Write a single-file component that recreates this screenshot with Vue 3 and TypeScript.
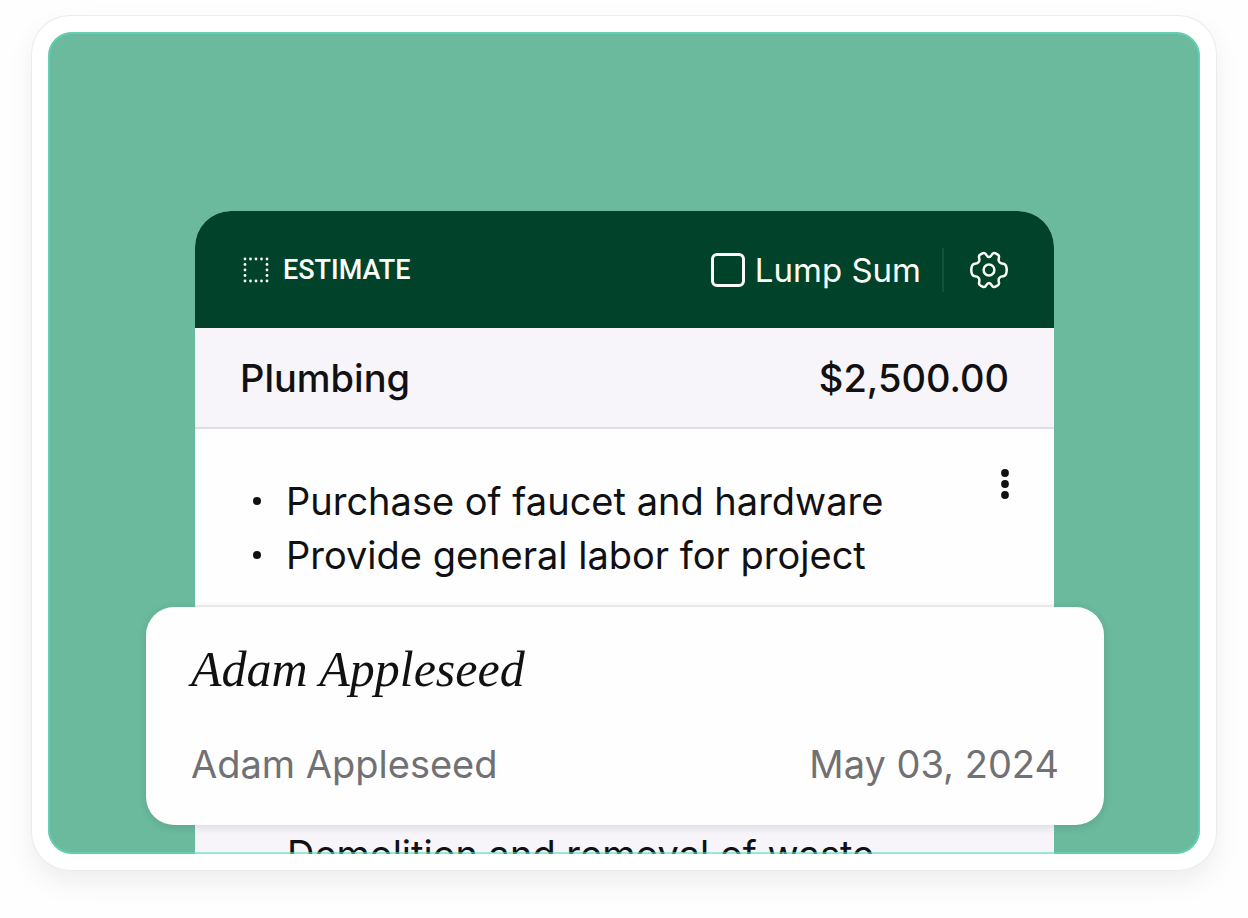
<script setup lang="ts">
import { ref } from 'vue'

interface LineItem {
  name: string
  price: string
  tasks: string[]
}

const lumpSum = ref(false)
const item: LineItem = {
  name: 'Plumbing',
  price: '$2,500.00',
  tasks: ['Purchase of faucet and hardware', 'Provide general labor for project'],
}
const nextTask = 'Demolition and removal of waste'
const signer = 'Adam Appleseed'
const signedOn = 'May 03, 2024'

const dots: { x: number; y: number }[] = []
for (let row = 0; row < 5; row++) {
  for (let col = 0; col < 5; col++) {
    if (row === 0 || row === 4 || col === 0 || col === 4) {
      dots.push({ x: 3 + col * 5.5, y: 3 + row * 5.5 })
    }
  }
}
</script>

<template>
  <main class="page">
    <div class="frame">
      <div class="canvas">
        <article class="estimate">
          <header class="bar">
            <h1 class="title">
              <svg class="dotted" viewBox="0 0 28 28" aria-hidden="true">
                <circle v-for="(d, i) in dots" :key="i" :cx="d.x" :cy="d.y" r="1.4" />
              </svg>
              Estimate
            </h1>
            <div class="tools">
              <label class="lump">
                <input v-model="lumpSum" type="checkbox" class="check" />
                <span>Lump Sum</span>
              </label>
              <span class="divider"></span>
              <button type="button" class="gear" aria-label="Estimate settings">
                <svg viewBox="0 0 40 40" aria-hidden="true">
                  <path
                    d="M17.3 4.8C18.2 6.4 19 7 20 7C21 7 21.8 6.4 22.7 4.8C23.5 3.2 24.6 2.7 26 3.1L28.4 4.3C29.9 5.1 30.3 6.3 29.9 7.8C29.4 9.6 29.5 10.8 30.2 11.9C30.9 13 32 13.6 34 13.7C35.7 13.8 36.6 14.5 37.1 16.1C37.9 18.7 37.9 21.3 37.1 23.9C36.6 25.5 35.7 26.2 34 26.3C32 26.4 30.9 27 30.2 28.1C29.5 29.2 29.4 30.4 29.9 32.2C30.3 33.7 29.9 34.9 28.4 35.7L26 36.9C24.6 37.3 23.5 36.8 22.7 35.2C21.8 33.6 21 33 20 33C19 33 18.2 33.6 17.3 35.2C16.5 36.8 15.4 37.3 14 36.9L11.6 35.7C10.1 34.9 9.7 33.7 10.1 32.2C10.6 30.4 10.5 29.2 9.8 28.1C9.1 27 8 26.4 6 26.3C4.3 26.2 3.4 25.5 2.9 23.9C2.1 21.3 2.1 18.7 2.9 16.1C3.4 14.5 4.3 13.8 6 13.7C8 13.6 9.1 13 9.8 11.9C10.5 10.8 10.6 9.6 10.1 7.8C9.7 6.3 10.1 5.1 11.6 4.3L14 3.1C15.4 2.7 16.5 3.2 17.3 4.8Z"
                  />
                  <circle cx="20" cy="20" r="5.4" />
                </svg>
              </button>
            </div>
          </header>

          <div class="summary">
            <h2>{{ item.name }}</h2>
            <span>{{ item.price }}</span>
          </div>

          <section class="details">
            <ul>
              <li v-for="task in item.tasks" :key="task">{{ task }}</li>
            </ul>
            <button type="button" class="more" aria-label="More options">
              <svg viewBox="0 0 10 32" aria-hidden="true">
                <circle cx="5" cy="5" r="3.9" />
                <circle cx="5" cy="16" r="3.9" />
                <circle cx="5" cy="27" r="3.9" />
              </svg>
            </button>
          </section>

          <section class="signature">
            <p class="handwriting">{{ signer }}</p>
            <p class="signed">
              <span>{{ signer }}</span>
              <time datetime="2024-05-03">{{ signedOn }}</time>
            </p>
          </section>

          <p class="next">{{ nextTask }}</p>
        </article>
      </div>
    </div>
  </main>
</template>

<style>
body {
  margin: 0;
  background: #fefefe;
}
</style>

<style scoped>
* {
  box-sizing: border-box;
}

h1,
h2,
p,
ul {
  margin: 0;
  padding: 0;
  font-size: inherit;
  font-weight: inherit;
}

.page {
  display: flex;
  height: 100vh;
  padding: 16px 32px 48px;
  overflow: hidden;
  font-family: Inter, "Liberation Sans", sans-serif;
  font-size: 38px;
  line-height: 54px;
  color: #111013;
}

.frame {
  display: flex;
  flex: 1;
  padding: 16px;
  border-radius: 38px;
  background: #fff;
  box-shadow:
    0 0 0 1px #ebebeb,
    0 12px 28px rgba(0, 0, 0, 0.07);
}

.canvas {
  position: relative;
  flex: 1;
  overflow: hidden;
  padding: 179px 146px 0 147px;
  border-radius: 24px;
  background: #6bba9e;
}

.canvas::after {
  content: "";
  position: absolute;
  inset: 0;
  z-index: 2;
  border: 2px solid rgba(88, 224, 192, 0.6);
  border-radius: 24px;
  pointer-events: none;
}

.estimate {
  border-radius: 36px 36px 0 0;
  background: #fefefe;
}

.bar {
  display: flex;
  align-items: center;
  justify-content: space-between;
  height: 117px;
  padding: 0 45px 0 47px;
  border-radius: 36px 36px 0 0;
  background: #00432a;
  color: #fcfdf8;
}

.title {
  display: flex;
  align-items: center;
  gap: 13px;
  font-family: Roboto, sans-serif;
  font-size: 27px;
  font-weight: 500;
  line-height: 32px;
  text-transform: uppercase;
}

.dotted {
  width: 28px;
  height: 28px;
  fill: currentColor;
}

.tools,
.lump {
  display: flex;
  align-items: center;
}

.lump {
  gap: 10px;
  font-size: 33px;
  line-height: 40px;
}

.check {
  appearance: none;
  width: 34px;
  height: 34px;
  margin: 0;
  border: 3px solid currentColor;
  border-radius: 6px;
  color: inherit;
}

.check:checked {
  background: #6bba9e;
}

.divider {
  width: 2px;
  height: 44px;
  margin: 0 25px 0 21px;
  background: #12533a;
}

button {
  display: block;
  padding: 0;
  border: 0;
  background: none;
  color: inherit;
}

button svg {
  display: block;
}

.gear svg {
  width: 40px;
  height: 40px;
  fill: none;
  stroke: currentColor;
  stroke-width: 2.5;
  stroke-linejoin: round;
}

.summary {
  display: flex;
  align-items: center;
  justify-content: space-between;
  height: 101px;
  padding: 0 45px;
  border-bottom: 2px solid #dfdde1;
  background: #f7f5f9;
  font-weight: 500;
}

.details {
  display: flex;
  align-items: flex-start;
  justify-content: space-between;
  padding: 39px 44px 23px 58px;
  border-bottom: 2px solid #f1f0f3;
}

ul {
  padding-top: 6px;
  list-style: none;
}

li {
  display: flex;
  align-items: center;
  gap: 25px;
}

li::before {
  content: "";
  width: 8px;
  height: 8px;
  border-radius: 50%;
  background: currentColor;
}

.more svg {
  width: 10px;
  height: 32px;
  fill: currentColor;
}

.signature {
  position: relative;
  z-index: 1;
  margin: 0 -50px 0 -49px;
  padding: 26px 45px 34px;
  border-radius: 28px;
  background: #fefefe;
  box-shadow: 0 2px 10px rgba(0, 0, 0, 0.12);
}

.handwriting {
  font-family: "Liberation Serif", serif;
  font-size: 50px;
  font-style: italic;
  line-height: 72px;
}

.signed {
  display: flex;
  justify-content: space-between;
  margin-top: 32px;
  color: #717073;
}

.next {
  padding: 2px 0 0 92px;
  background: #f7f5f9;
}
</style>
